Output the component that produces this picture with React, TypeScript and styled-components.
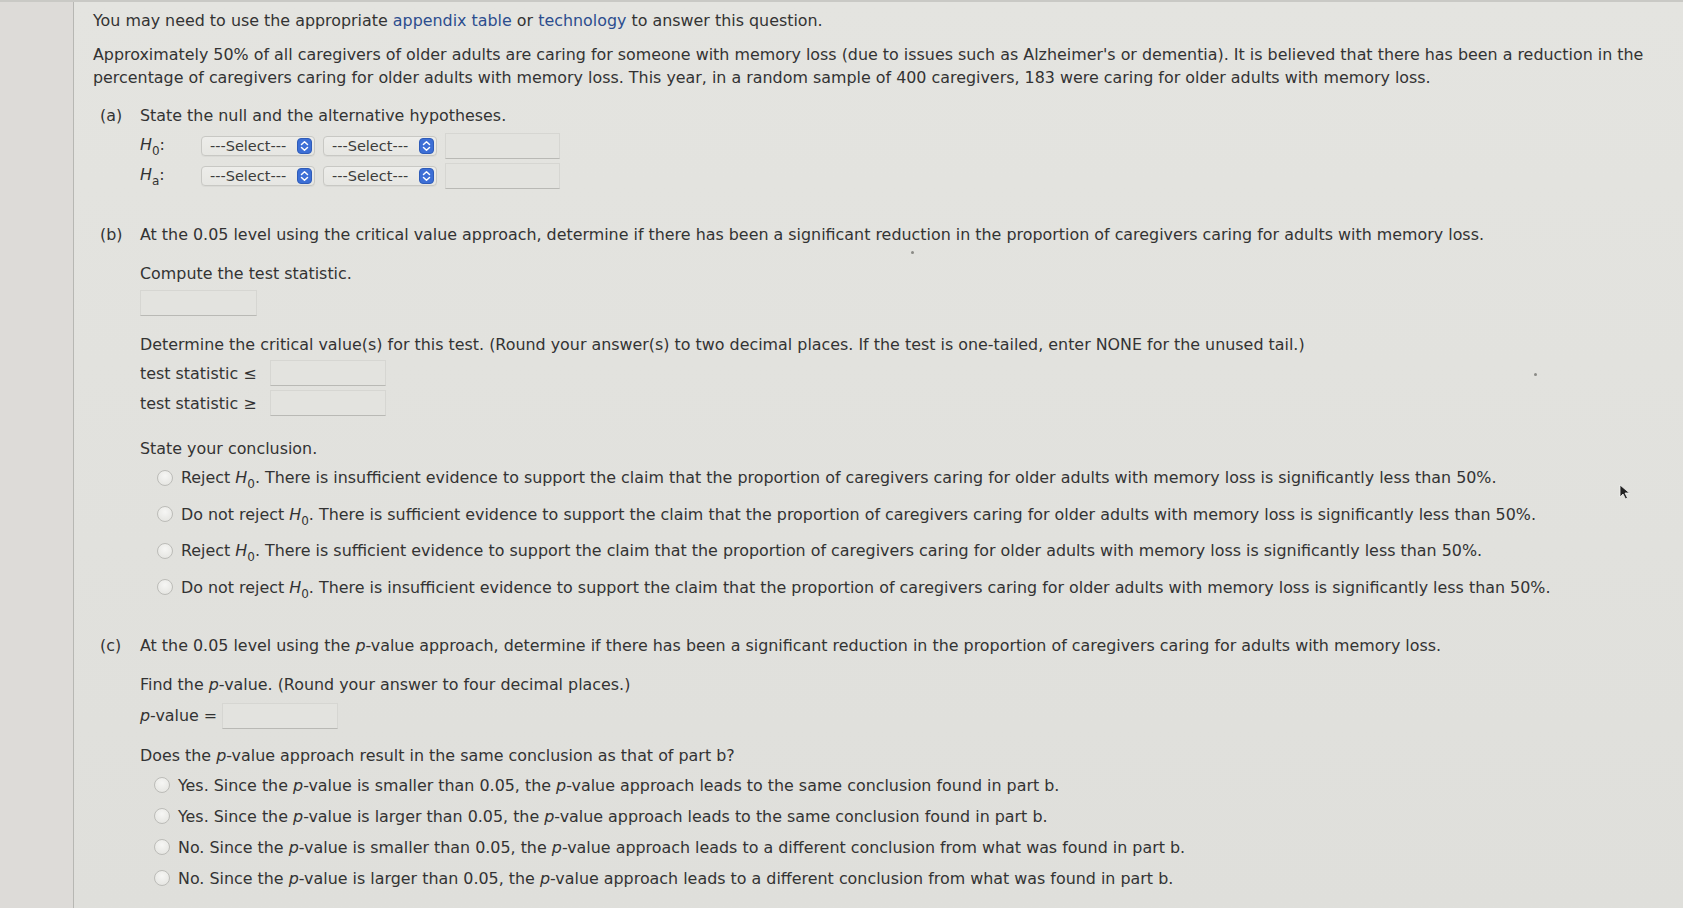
import React from "react";
import styled, { createGlobalStyle } from "styled-components";

const GlobalStyle = createGlobalStyle`
  html, body { margin: 0; padding: 0; }
  body {
    background: #e1e1dd;
    font-family: "DejaVu Sans", Verdana, sans-serif;
    color: #333333;
  }
`;

const Page = styled.div`
  position: relative;
  display: flex;
  width: 1683px;
  height: 908px;
  overflow: hidden;
  box-sizing: border-box;
  border-top: 2px solid #c9c9c5;
  background: linear-gradient(180deg, #e4e4e0 0%, #e1e1dd 60%, #dfdfdb 100%);
`;

const Gutter = styled.div`
  flex: none;
  width: 73px;
  border-right: 1px solid #b7b7b3;
  background: #dddbd8;
`;

const Main = styled.main`
  flex: 1;
  padding: 7px 0 0 19px;
  font-size: 15.9px;
  line-height: 23px;
`;

const Line = styled.div<{ $top?: number }>`
  white-space: nowrap;
  margin-top: ${(p) => p.$top ?? 0}px;
`;

const Link = styled.span`
  color: #2c4d8e;
`;

const Var = styled.i`
  font-style: italic;
`;

const Sub = styled.sub`
  font-size: 12px;
  vertical-align: -5px;
  line-height: 0;
`;

const Part = styled.section<{ $top: number }>`
  display: grid;
  grid-template-columns: 47px 1fr;
  margin-top: ${(p) => p.$top}px;
`;

const PartLabel = styled.div`
  padding-left: 7px;
  white-space: nowrap;
`;

const PartBody = styled.div`
  display: flex;
  flex-direction: column;
`;

const HypGrid = styled.div`
  display: grid;
  grid-template-columns: 53px auto auto auto;
  justify-content: start;
  align-items: center;
  column-gap: 8px;
  row-gap: 2px;
  margin-top: 5px;
`;

const HypLabel = styled.div`
  height: 28px;
  line-height: 26px;
`;

const SelectBox = styled.div`
  box-sizing: border-box;
  width: 114px;
  height: 20px;
  display: flex;
  align-items: center;
  justify-content: space-between;
  padding: 0 2px 0 8px;
  border: 1px solid #c8c8c4;
  border-radius: 4px;
  background: linear-gradient(180deg, #ededea, #e6e6e2);
  font-size: 14.5px;
  color: #3c3c3c;
  box-shadow: 0 1px 0 rgba(0, 0, 0, 0.04);
`;

const AnswerBox = styled.div<{ $w?: number }>`
  box-sizing: border-box;
  width: ${(p) => p.$w ?? 115}px;
  height: 26px;
  border: 1px solid #d6d6d2;
  border-bottom: 1px solid #b9b9b5;
  background: #e3e3df;
`;

const CompRow = styled.div<{ $top: number }>`
  margin-top: ${(p) => p.$top}px;
`;

const StatGrid = styled.div<{ $top: number }>`
  display: grid;
  grid-template-columns: auto auto;
  justify-content: start;
  align-items: center;
  column-gap: 10px;
  row-gap: 4px;
  margin-top: ${(p) => p.$top}px;
`;

const StatLabel = styled.div`
  width: 120px;
  white-space: nowrap;
`;

const OptionList = styled.div<{ $top: number; $gap: number; $indent: number }>`
  display: flex;
  flex-direction: column;
  gap: ${(p) => p.$gap}px;
  margin-top: ${(p) => p.$top}px;
  margin-left: ${(p) => p.$indent}px;
`;

const Option = styled.label`
  display: flex;
  align-items: center;
  gap: 8px;
  white-space: nowrap;
`;

const Radio = styled.span`
  flex: none;
  width: 14px;
  height: 14px;
  border-radius: 50%;
  border: 1px solid #bcbcb8;
  background: radial-gradient(circle at 50% 35%, #f6f6f4 0%, #e2e2de 100%);
`;

const PRow = styled.div`
  display: flex;
  align-items: center;
  gap: 5px;
  margin-top: 7px;
`;

const Cursor = styled.svg`
  position: absolute;
  left: 1619px;
  top: 482px;
`;

const Speck = styled.span<{ $x: number; $y: number }>`
  position: absolute;
  left: ${(p) => p.$x}px;
  top: ${(p) => p.$y}px;
  width: 3px;
  height: 3px;
  border-radius: 50%;
  background: #8a8a86;
`;

const StepIcon = () => (
  <svg width="15" height="16" viewBox="0 0 15 16">
    <rect x="0.5" y="0.5" width="14" height="15" rx="3.5" fill="#3d6fd6" stroke="#2f5cb8" />
    <path d="M4.5 6.5 L7.5 3.8 L10.5 6.5" fill="none" stroke="#fff" strokeWidth="1.5" strokeLinecap="round" strokeLinejoin="round" />
    <path d="M4.5 9.5 L7.5 12.2 L10.5 9.5" fill="none" stroke="#fff" strokeWidth="1.5" strokeLinecap="round" strokeLinejoin="round" />
  </svg>
);

const Select = () => (
  <SelectBox>
    <span>---Select---</span>
    <StepIcon />
  </SelectBox>
);

const H0 = () => (
  <>
    <Var>H</Var>
    <Sub>0</Sub>
  </>
);

const P = () => <Var>p</Var>;

const conclusions: { lead: string; body: string }[] = [
  { lead: "Reject ", body: " There is insufficient evidence to support the claim that the proportion of caregivers caring for older adults with memory loss is significantly less than 50%." },
  { lead: "Do not reject ", body: " There is sufficient evidence to support the claim that the proportion of caregivers caring for older adults with memory loss is significantly less than 50%." },
  { lead: "Reject ", body: " There is sufficient evidence to support the claim that the proportion of caregivers caring for older adults with memory loss is significantly less than 50%." },
  { lead: "Do not reject ", body: " There is insufficient evidence to support the claim that the proportion of caregivers caring for older adults with memory loss is significantly less than 50%." },
];

const pOptions: React.ReactNode[] = [
  <>Yes. Since the <P />-value is smaller than 0.05, the <P />-value approach leads to the same conclusion found in part b.</>,
  <>Yes. Since the <P />-value is larger than 0.05, the <P />-value approach leads to the same conclusion found in part b.</>,
  <>No. Since the <P />-value is smaller than 0.05, the <P />-value approach leads to a different conclusion from what was found in part b.</>,
  <>No. Since the <P />-value is larger than 0.05, the <P />-value approach leads to a different conclusion from what was found in part b.</>,
];

export default function App() {
  return (
    <>
      <GlobalStyle />
      <Page>
        <Gutter />
        <Main>
          <Line>
            You may need to use the appropriate <Link>appendix table</Link> or <Link>technology</Link> to answer this question.
          </Line>
          <Line $top={11}>
            Approximately 50% of all caregivers of older adults are caring for someone with memory loss (due to issues such as Alzheimer's or dementia). It is believed that there has been a reduction in the
          </Line>
          <Line>
            percentage of caregivers caring for older adults with memory loss. This year, in a random sample of 400 caregivers, 183 were caring for older adults with memory loss.
          </Line>

          <Part $top={15}>
            <PartLabel>(a)</PartLabel>
            <PartBody>
              <div>State the null and the alternative hypotheses.</div>
              <HypGrid>
                <HypLabel>
                  <H0 />:
                </HypLabel>
                <Select />
                <Select />
                <AnswerBox />
                <HypLabel>
                  <Var>H</Var>
                  <Sub>a</Sub>:
                </HypLabel>
                <Select />
                <Select />
                <AnswerBox />
              </HypGrid>
            </PartBody>
          </Part>

          <Part $top={33}>
            <PartLabel>(b)</PartLabel>
            <PartBody>
              <div>
                At the 0.05 level using the critical value approach, determine if there has been a significant reduction in the proportion of caregivers caring for adults with memory loss.
              </div>
              <CompRow $top={16}>Compute the test statistic.</CompRow>
              <CompRow $top={5}>
                <AnswerBox $w={117} />
              </CompRow>
              <CompRow $top={17}>
                Determine the critical value(s) for this test. (Round your answer(s) to two decimal places. If the test is one-tailed, enter NONE for the unused tail.)
              </CompRow>
              <StatGrid $top={4}>
                <StatLabel>test statistic ≤</StatLabel>
                <AnswerBox $w={116} />
                <StatLabel>test statistic ≥</StatLabel>
                <AnswerBox $w={116} />
              </StatGrid>
              <CompRow $top={21}>State your conclusion.</CompRow>
              <OptionList $top={6} $gap={13.5} $indent={17}>
                {conclusions.map((c, i) => (
                  <Option key={i}>
                    <Radio />
                    <span>
                      {c.lead}
                      <H0 />.{c.body}
                    </span>
                  </Option>
                ))}
              </OptionList>
            </PartBody>
          </Part>

          <Part $top={35}>
            <PartLabel>(c)</PartLabel>
            <PartBody>
              <div>
                At the 0.05 level using the <P />-value approach, determine if there has been a significant reduction in the proportion of caregivers caring for adults with memory loss.
              </div>
              <CompRow $top={16}>
                Find the <P />-value. (Round your answer to four decimal places.)
              </CompRow>
              <PRow>
                <span>
                  <P />-value =
                </span>
                <AnswerBox $w={116} />
              </PRow>
              <CompRow $top={15}>
                Does the <P />-value approach result in the same conclusion as that of part b?
              </CompRow>
              <OptionList $top={7} $gap={8} $indent={14}>
                {pOptions.map((o, i) => (
                  <Option key={i}>
                    <Radio />
                    <span>{o}</span>
                  </Option>
                ))}
              </OptionList>
            </PartBody>
          </Part>
        </Main>
        <Cursor width="12" height="16" viewBox="0 0 12 16">
          <path d="M1 1 L1 13 L4 10 L6.5 15 L8.5 14 L6 9 L10.5 9 Z" fill="#222" stroke="#f4f4f2" strokeWidth="0.8" />
        </Cursor>
        <Speck $x={1534} $y={371} />
        <Speck $x={911} $y={249} />
      </Page>
    </>
  );
}
